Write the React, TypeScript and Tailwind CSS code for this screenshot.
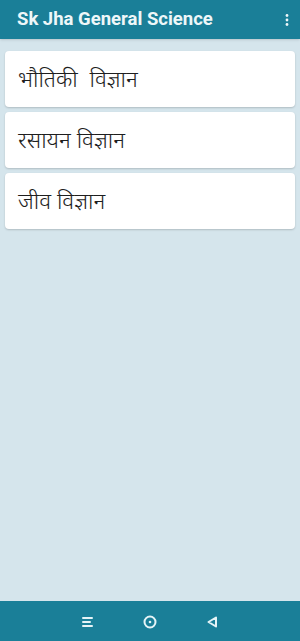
export default function App() {
  const items = ["भौतिकी  विज्ञान", "रसायन विज्ञान", "जीव विज्ञान"];

  return (
    <div className="flex h-[641px] w-[300px] flex-col bg-[#d5e5ec] font-['Roboto','Noto_Sans',sans-serif]">
      <header className="flex h-[39px] shrink-0 items-center justify-between bg-[#1a7f98] pl-[17px] pr-[11px] shadow-sm">
        <h1 className="text-[18.5px] font-bold leading-none text-[#eef7f9]">Sk Jha General Science</h1>
        <svg width="4" height="12" viewBox="0 0 4 12" className="fill-[#eef7f9]">
          <circle cx="2" cy="1.5" r="1.4" />
          <circle cx="2" cy="6" r="1.4" />
          <circle cx="2" cy="10.5" r="1.4" />
        </svg>
      </header>

      <main className="flex flex-1 flex-col gap-[5px] px-[5px] pt-[12px]">
        {items.map((t) => (
          <div
            key={t}
            className="flex h-[56px] items-center rounded-[4px] bg-white pl-[13px] pt-[6px] shadow-[0_1px_2px_rgba(0,0,0,0.18)]"
          >
            <span className="whitespace-pre text-[22.5px] font-light leading-none text-[#1e1e1e] font-['Noto_Sans_Devanagari','Noto_Sans','Lohit_Devanagari',sans-serif]">
              {t}
            </span>
          </div>
        ))}
      </main>

      <nav className="flex h-[40px] shrink-0 items-center justify-center gap-[46px] bg-[#1a7f98] pt-[1px]">
        <svg width="16" height="16" viewBox="0 0 16 16" fill="none" stroke="#e6f4f7" strokeWidth="2" strokeLinecap="round">
          <line x1="3" y1="4" x2="12" y2="4" />
          <line x1="3" y1="8" x2="10" y2="8" />
          <line x1="3" y1="12" x2="12" y2="12" />
        </svg>
        <svg width="16" height="16" viewBox="0 0 16 16" fill="none" stroke="#e6f4f7" strokeWidth="2">
          <circle cx="8" cy="8" r="5.5" />
          <circle cx="8" cy="8" r="1.3" fill="#e6f4f7" stroke="none" />
        </svg>
        <svg width="16" height="16" viewBox="0 0 16 16" fill="none" stroke="#e6f4f7" strokeWidth="2" strokeLinejoin="round">
          <path d="M12 3.5 L4.5 8 L12 12.5 Z" />
        </svg>
      </nav>
    </div>
  );
}
